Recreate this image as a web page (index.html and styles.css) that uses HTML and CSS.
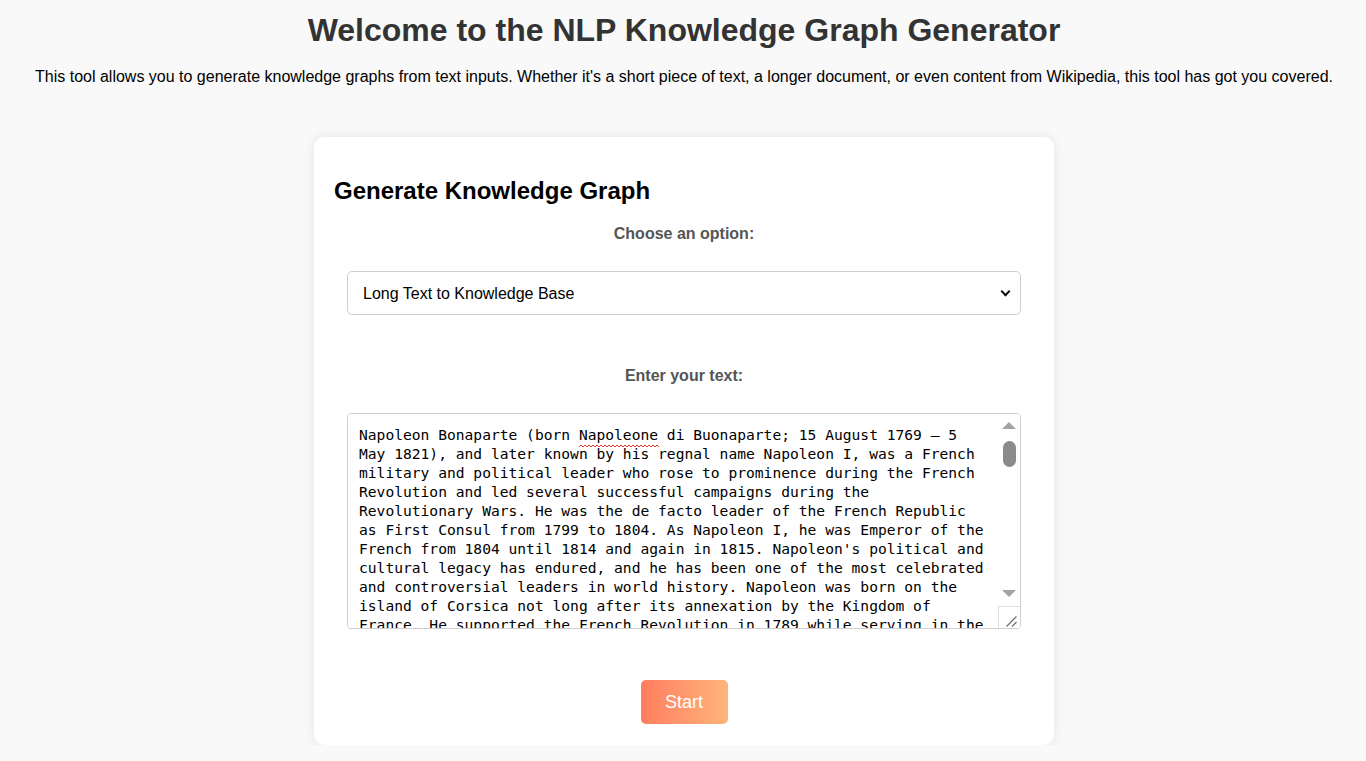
FILE: index.html
```html
<!DOCTYPE html>
<html lang="en">
<head>
<meta charset="utf-8">
<title>NLP Knowledge Graph Generator</title>
<link rel="stylesheet" href="styles.css">
</head>
<body>
  <h1 class="title">Welcome to the NLP Knowledge Graph Generator</h1>
  <p class="intro">This tool allows you to generate knowledge graphs from text inputs. Whether it's a short piece of text, a longer document, or even content from Wikipedia, this tool has got you covered.</p>

  <main class="card">
    <h2 class="card-title">Generate Knowledge Graph</h2>
    <label class="field-label" for="option">Choose an option:</label>
    <div class="select-wrap">
      <select id="option" class="select">
        <option>Long Text to Knowledge Base</option>
        <option>Short Text to Knowledge Base</option>
        <option>Wikipedia to Knowledge Base</option>
      </select>
    </div>
    <label class="field-label label-gap" for="text">Enter your text:</label>
    <div class="text-wrap">
      <textarea id="text" class="text-input" spellcheck="false">Napoleon Bonaparte (born Napoleone di Buonaparte; 15 August 1769 – 5 May 1821), and later known by his regnal name Napoleon I, was a French military and political leader who rose to prominence during the French Revolution and led several successful campaigns during the Revolutionary Wars. He was the de facto leader of the French Republic as First Consul from 1799 to 1804. As Napoleon I, he was Emperor of the French from 1804 until 1814 and again in 1815. Napoleon's political and cultural legacy has endured, and he has been one of the most celebrated and controversial leaders in world history. Napoleon was born on the island of Corsica not long after its annexation by the Kingdom of France. He supported the French Revolution in 1789 while serving in the French army, and tried to spread its ideals to his native Corsica. He rose rapidly in the Army after he saved the governing French Directory by firing on royalist insurgents. In 1796, he began a military campaign against the Austrians and their Italian allies, scoring decisive victories and becoming a national hero. Two years later, he led a military expedition to Egypt that served as a springboard to political power. He engineered a coup in November 1799 and became First Consul of the Republic. Differences with the British meant that the French faced the War of the Third Coalition by 1805. Napoleon shattered this coalition with victories in the Ulm Campaign, and at the Battle of Austerlitz, which led to the dissolving of the Holy Roman Empire. In 1806, the Fourth Coalition took up arms against him because Prussia became worried about growing French influence on the continent. Napoleon knocked out Prussia at the battles of Jena and Auerstedt, marched the Grande Armée into Eastern Europe, annihilating the Russians in June 1807 at Friedland, and forcing the defeated nations of the Fourth Coalition to accept the Treaties of Tilsit. Two years later, the Austrians challenged the French again during the War of the Fifth Coalition, but Napoleon solidified his grip over Europe after triumphing at the Battle of Wagram. Hoping to extend the Continental System, his embargo against Britain, Napoleon invaded the Iberian Peninsula and declared his brother Joseph King of Spain in 1808. The Spanish and the Portuguese revolted in the Peninsular War, culminating in defeat for Napoleon's marshals. Napoleon launched an invasion of Russia in the summer of 1812. The resulting campaign witnessed the catastrophic retreat of Napoleon's Grande Armée. In 1813, Prussia and Austria joined Russian forces in a Sixth Coalition against France. A chaotic military campaign resulted in a large coalition army defeating Napoleon at the Battle of Leipzig in October 1813. The coalition invaded France and captured Paris, forcing Napoleon to abdicate in April 1814. He was exiled to the island of Elba, between Corsica and Italy. In France, the Bourbons were restored to power. However, Napoleon escaped Elba in February 1815 and took control of France. The Allies responded by forming a Seventh Coalition, which defeated Napoleon at the Battle of Waterloo in June 1815. The British exiled him to the remote island of Saint Helena in the Atlantic, where he died in 1821 at the age of 51.</textarea>
      <svg class="spell-mark" width="80" height="4" viewBox="0 0 80 4" aria-hidden="true">
        <polyline points="0,3 2,1 4,3 6,1 8,3 10,1 12,3 14,1 16,3 18,1 20,3 22,1 24,3 26,1 28,3 30,1 32,3 34,1 36,3 38,1 40,3 42,1 44,3 46,1 48,3 50,1 52,3 54,1 56,3 58,1 60,3 62,1 64,3 66,1 68,3 70,1 72,3 74,1 76,3 78,1 80,3" fill="none" stroke="#e0392b" stroke-width="1"/>
      </svg>
      <div class="scrollbar" aria-hidden="true">
        <div class="sb-btn"><span class="arrow-up"></span></div>
        <div class="sb-track"><div class="sb-thumb"></div></div>
        <div class="sb-btn"><span class="arrow-down"></span></div>
        <div class="sb-corner">
          <svg width="22" height="22" viewBox="0 0 22 22">
            <line x1="8.5" y1="20.5" x2="18.5" y2="10.5" stroke="#6e6e6e" stroke-width="1.2"/>
            <line x1="14" y1="20.5" x2="18.5" y2="16" stroke="#6e6e6e" stroke-width="1.2"/>
          </svg>
        </div>
      </div>
    </div>
    <div class="actions">
      <button class="start-btn" type="button">Start</button>
    </div>
  </main>
</body>
</html>
```

FILE: styles.css
```css
* {
  box-sizing: border-box;
}

body {
  margin: 0;
  padding-left: 2px;
  background: #f9f9f9;
  font-family: "Liberation Sans", Arial, sans-serif;
  color: #000;
}

.title {
  margin: 12px 0 0;
  font-size: 32px;
  font-weight: bold;
  color: #333;
  text-align: center;
}

.intro {
  margin: 19px 0 0;
  font-size: 16px;
  text-align: center;
}

.card {
  display: flex;
  flex-direction: column;
  width: 740px;
  margin: 51px auto 0;
  padding: 20px 20px 21px;
  background: #fff;
  border-radius: 10px;
  box-shadow: 0 0 12px rgba(0, 0, 0, 0.09);
}

.card-title {
  margin: 20px 0;
  font-size: 24px;
  font-weight: bold;
  color: #000;
}

.field-label {
  display: block;
  font-size: 16px;
  font-weight: bold;
  color: #555;
  text-align: center;
}

.label-gap {
  margin-top: 52px;
}

.select-wrap {
  position: relative;
  width: 674px;
  margin: 28px auto 0;
}

.select-wrap::after {
  content: "";
  position: absolute;
  right: 12px;
  top: 17px;
  width: 5px;
  height: 5px;
  border-right: 2px solid #111;
  border-bottom: 2px solid #111;
  transform: rotate(45deg);
  pointer-events: none;
}

.select {
  display: block;
  width: 100%;
  height: 44px;
  padding: 0 30px 0 15px;
  font-family: "Liberation Sans", Arial, sans-serif;
  font-size: 16px;
  color: #000;
  background: #fff;
  border: 1px solid #cfcfcf;
  border-radius: 5px;
  appearance: none;
  -webkit-appearance: none;
}

.text-wrap {
  position: relative;
  width: 674px;
  margin: 28px auto 0;
}

.text-input {
  display: block;
  width: 100%;
  height: 216px;
  padding: 11px 33px 11px 11px;
  font-family: "DejaVu Sans Mono", "Liberation Mono", monospace;
  font-size: 14.62px;
  line-height: 19px;
  color: #000;
  background: #fff;
  border: 1px solid #cfcfcf;
  border-radius: 4px;
  resize: none;
  overflow-y: auto;
  scrollbar-width: none;
}

.text-input::-webkit-scrollbar {
  display: none;
}

.spell-mark {
  position: absolute;
  left: 232px;
  top: 31px;
  pointer-events: none;
}

.scrollbar {
  position: absolute;
  top: 1px;
  right: 1px;
  bottom: 1px;
  width: 22px;
  display: flex;
  flex-direction: column;
  background: #fff;
  border-radius: 0 3px 3px 0;
  pointer-events: none;
}

.sb-btn {
  height: 22px;
  display: flex;
  align-items: center;
  justify-content: center;
}

.arrow-up {
  width: 0;
  height: 0;
  border-left: 7px solid transparent;
  border-right: 7px solid transparent;
  border-bottom: 7px solid #a3a3a3;
}

.arrow-down {
  width: 0;
  height: 0;
  border-left: 7px solid transparent;
  border-right: 7px solid transparent;
  border-top: 7px solid #a3a3a3;
}

.sb-track {
  flex: 1;
  padding: 5px 0 0 5px;
}

.sb-thumb {
  width: 13px;
  height: 26px;
  background: #8b8b8b;
  border-radius: 7px;
}

.sb-corner {
  height: 22px;
  margin-top: 2px;
  border-top: 1px solid #dedede;
  border-left: 1px solid #dedede;
  display: flex;
  align-items: flex-end;
  justify-content: flex-end;
}

.sb-corner svg {
  display: block;
  margin: -1px 0 0 -1px;
}

.actions {
  display: flex;
  justify-content: center;
  margin-top: 51px;
}

.start-btn {
  width: 87px;
  height: 44px;
  padding: 0;
  font-family: "Liberation Sans", Arial, sans-serif;
  font-size: 18px;
  color: #fff;
  background: linear-gradient(to right, #ff7e5f, #feb47b);
  border: none;
  border-radius: 5px;
  cursor: pointer;
}
```
